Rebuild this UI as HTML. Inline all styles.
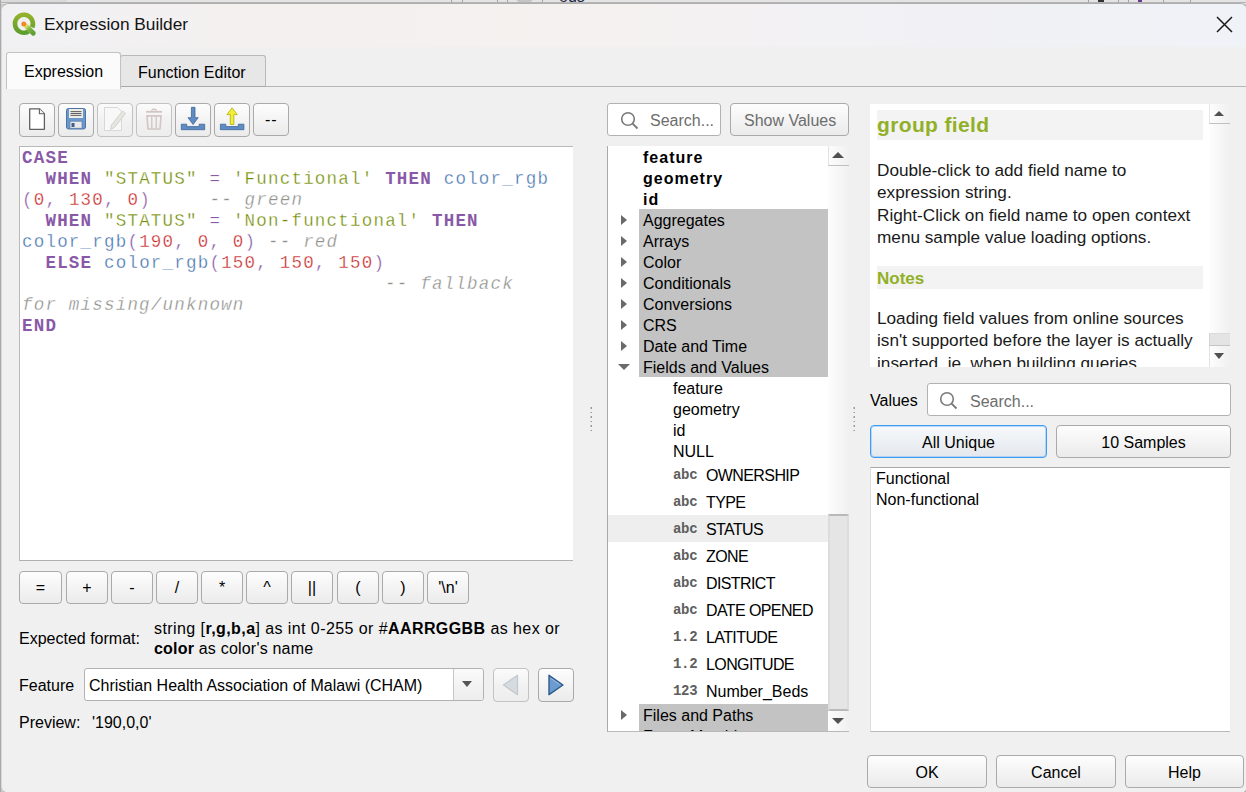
<!DOCTYPE html>
<html><head><meta charset="utf-8">
<style>
*{box-sizing:border-box;margin:0;padding:0}
html,body{width:1246px;height:792px;overflow:hidden;background:#f0f0f0}
body{position:relative;font-family:"Liberation Sans",sans-serif;font-size:16px;color:#000}
.a{position:absolute}
.t{position:absolute;white-space:pre;line-height:16px}
.btn{position:absolute;border:1px solid #aaaaaa;border-radius:4px;background:linear-gradient(#fdfdfd,#f3f3f3 55%,#ebebeb)}
.btnd{position:absolute;border:1px solid #c2c2c2;border-radius:4px;background:linear-gradient(#fbfbfb,#f1f1f1 55%,#ededed)}
.bl{position:absolute;left:0;right:0;text-align:center;white-space:pre;line-height:16px}
.ob .bl{top:8px !important}
.code{font-family:"Liberation Mono",monospace;font-size:17.5px;letter-spacing:1.21px;white-space:pre;line-height:21px}
.kw{color:#8959a8;font-weight:bold}
.fn{color:#4271ae}
.st{color:#718c00}
.nu{color:#c82829}
.op{color:#8959a8}
.cm{color:#8e908c;font-style:italic}
.fn,.st,.nu,.op,.cm{-webkit-text-stroke:0.3px #fff}
.row{position:absolute;height:21px;line-height:21px;white-space:pre;padding-top:1px}
.grp{background:#c3c3c3;left:31px;width:189px;padding-left:4px}
.arr{position:absolute;width:0;height:0;border-top:5px solid transparent;border-bottom:5px solid transparent;border-left:6px solid #6a6a6a}
.ic{position:absolute;font-family:"Liberation Mono",monospace;font-size:14px;font-weight:bold;color:#5e5e5e;line-height:13px;letter-spacing:-0.3px}
.help{position:absolute;font-size:17.2px;color:#1a1a1a;line-height:22.4px;white-space:pre}
</style></head><body>
<!-- background window strip -->
<div class="a" style="left:0;top:0;width:1246px;height:792px;background:#c4c4c4"></div>
<div class="a" style="left:0;top:0;width:1246px;height:4px;background:#e4e4e4"></div>
<div class="a" style="left:0;top:0;width:67px;height:3px;background:#dadada"></div><div class="a" style="left:451px;top:0;width:1px;height:3px;background:#a0a0a0"></div><div class="a" style="left:462px;top:0;width:1px;height:3px;background:#a0a0a0"></div><div class="a" style="left:497px;top:0;width:1px;height:3px;background:#a0a0a0"></div><div class="a" style="left:507px;top:0;width:1px;height:3px;background:#a0a0a0"></div><div class="a" style="left:542px;top:0;width:1px;height:3px;background:#a0a0a0"></div><div class="a" style="left:1088px;top:0;width:1px;height:3px;background:#a0a0a0"></div><div class="a" style="left:1118px;top:0;width:1px;height:3px;background:#a0a0a0"></div><div class="a" style="left:1128px;top:0;width:1px;height:3px;background:#a0a0a0"></div><div class="a" style="left:1163px;top:0;width:1px;height:3px;background:#a0a0a0"></div><div class="a" style="left:1190px;top:0;width:1px;height:3px;background:#a0a0a0"></div><div class="a" style="left:516px;top:-6px;width:17px;height:9px;border-radius:50%;background:#c4c4c4"></div><div class="t" style="left:559px;top:-11px;color:#1d2a44;font-size:16px">eds</div><div class="a" style="left:1098px;top:0;width:6px;height:2px;background:#333"></div><div class="a" style="left:1138px;top:0;width:4px;height:2px;background:#6b3a8c"></div><div class="a" style="left:0;top:2px;width:1246px;height:1px;background:#b4b4b4"></div>
<div class="a" style="left:0;top:0;width:1px;height:792px;background:#a9a9a9"></div>
<!-- window -->
<div class="a" style="left:1px;top:3px;width:1247px;height:791px;background:#f0f0f0;border-radius:8px;border:1px solid #aeaeae;border-left-color:#d8d8d8;overflow:hidden">
 <div class="a" style="left:0;top:0;width:1250px;height:43px;background:linear-gradient(90deg,#f1f1f4 0%,#f4f0ef 22%,#f5f1ef 42%,#f2f1f4 68%,#eff2f7 100%)"></div>
</div>
<svg class="a" style="left:0;top:0" width="48" height="48" viewBox="0 0 48 48">
 <defs><linearGradient id="qg" x1="0" y1="0" x2="0" y2="1"><stop offset="0" stop-color="#93b22a"/><stop offset="1" stop-color="#5e9e2e"/></linearGradient>
 <linearGradient id="qt" x1="0" y1="0" x2="1" y2="1"><stop offset="0" stop-color="#e6e56a"/><stop offset="0.45" stop-color="#7cb342"/><stop offset="1" stop-color="#5f9f35"/></linearGradient></defs>
 <path d="M32.2 27.3 A9 9 0 1 0 28.5 31.5" fill="none" stroke="url(#qg)" stroke-width="4.6"/>
 <path d="M25.8 25.8 L33.3 33.3" stroke="url(#qt)" stroke-width="4.8" stroke-linecap="round"/>
 <circle cx="23.8" cy="24" r="2.5" fill="#ef8a2c"/>
</svg>
<div class="t" style="left:44px;top:16px;font-size:17.3px;line-height:17px;color:#141414">Expression Builder</div>
<svg class="a" style="left:1214px;top:14px" width="22" height="22" viewBox="0 0 22 22"><path d="M3 3L18 18M18 3L3 18" stroke="#1a1a1a" stroke-width="1.5"/></svg>

<!-- tabs -->
<div class="a" style="left:6px;top:86px;width:1240px;height:1px;background:#b6b6b6"></div>
<div class="a" style="left:120px;top:55px;width:146px;height:32px;background:#e7e7e7;border:1px solid #b9b9b9;border-bottom:1px solid #a9a9a9;border-radius:3px 3px 0 0"></div>
<div class="t" style="left:138px;top:65px">Function Editor</div>
<div class="a" style="left:6px;top:52px;width:115px;height:37px;background:#fbfbfb;border:1px solid #c2c2c2;border-bottom:none;border-radius:3px 3px 0 0"></div>
<div class="t" style="left:24px;top:64px">Expression</div>

<!-- toolbar -->
<div class="btn" style="left:19px;top:103px;width:36px;height:34px">
 <svg class="a" style="left:-1px;top:-1px" width="36" height="34" viewBox="0 0 36 34"><path d="M10.7 5.8H20.4L25.4 10.8V26.3H10.7Z" fill="#fff" stroke="#616161" stroke-width="1.3" stroke-linejoin="round"/><path d="M20.4 5.8V10.8H25.4" fill="#f2f2f2" stroke="#616161" stroke-width="1.1"/></svg>
</div>
<div class="btn" style="left:58px;top:103px;width:36px;height:34px">
 <svg class="a" style="left:-1px;top:-1px" width="36" height="34" viewBox="0 0 36 34"><rect x="8.5" y="5.5" width="19" height="20.5" rx="2" fill="#6b98cb" stroke="#4c74a6" stroke-width="1"/><rect x="11" y="6" width="14" height="9" fill="#efebe7"/><path d="M12.5 8.6H23.5M12.5 10.5H23.5M12.5 12.4H23.5" stroke="#5e5e5e" stroke-width="1"/><rect x="12" y="18.2" width="12" height="7" fill="#e9e9e9" stroke="#4c74a6" stroke-width="0.6"/><rect x="13.5" y="20" width="3" height="4" fill="#3e5f8a"/></svg>
</div>
<div class="btnd" style="left:97px;top:103px;width:36px;height:34px">
 <svg class="a" style="left:-1px;top:-1px" width="36" height="34" viewBox="0 0 36 34"><path d="M7.5 4.5H20.5L24.5 8.5V27.5H7.5Z" fill="#f8f8f8" stroke="#d8d8d8" stroke-width="1"/><path d="M25.5 8L28.5 10.5L17.5 24.5L13.5 26.5L14.5 22Z" fill="#e6e6e0" stroke="#cfcfc8" stroke-width="0.9"/></svg>
</div>
<div class="btnd" style="left:136px;top:103px;width:36px;height:34px">
 <svg class="a" style="left:-1px;top:-1px" width="36" height="34" viewBox="0 0 36 34"><path d="M10 8.8H26" stroke="#d3c5c5" stroke-width="1.8"/><path d="M15.3 7.5Q18 5 20.7 7.5" fill="none" stroke="#d3c5c5" stroke-width="1.3"/><path d="M11 12.9H25L24 26H12Z" fill="none" stroke="#d3c5c5" stroke-width="1.6"/><path d="M15.8 13.5V25.5M20.2 13.5V25.5" stroke="#d3c5c5" stroke-width="1.4"/></svg>
</div>
<div class="btn" style="left:175px;top:103px;width:36px;height:34px">
 <svg class="a" style="left:-1px;top:-1px" width="36" height="34" viewBox="0 0 36 34"><path d="M16.4 4.3H20V14.7H23.2L18.1 21.5L13 14.7H16.4Z" fill="#5f8cc3" stroke="#3f6798" stroke-width="0.8" stroke-linejoin="round"/><path d="M6.3 21.2H11.7V23.6H24.2V21.2H29.7V26.7H6.3Z" fill="#5f8cc3" stroke="#3f6798" stroke-width="0.8"/></svg>
</div>
<div class="btn" style="left:214px;top:103px;width:36px;height:34px">
 <svg class="a" style="left:-1px;top:-1px" width="36" height="34" viewBox="0 0 36 34"><path d="M16.3 21.5V11.6H12.9L18.1 4.8L23.3 11.6H19.8V21.5Z" fill="#f2ef3c" stroke="#b3b000" stroke-width="0.8" stroke-linejoin="round"/><path d="M6.4 21.2H11.8V23.6H24.3V21.2H29.9V26.7H6.4Z" fill="#5f8cc3" stroke="#3f6798" stroke-width="0.8"/></svg>
</div>
<div class="btn" style="left:253px;top:103px;width:36px;height:33px"><div class="t" style="left:11px;top:8px;letter-spacing:1px">--</div></div>

<!-- code editor -->
<div class="a" style="left:19px;top:146px;width:554px;height:415px;background:#fff;border:1px solid #b9b9b9;border-right:none;border-bottom-color:#b0b0b0"></div>
<div class="a code" style="left:22px;top:148px"><span class="kw">CASE</span>
  <span class="kw">WHEN</span> <span class="st">"STATUS"</span> <span class="op">=</span> <span class="st">'Functional'</span> <span class="kw">THEN</span> <span class="fn">color_rgb</span>
<span class="op">(</span><span class="nu">0</span><span class="op">,</span> <span class="nu">130</span><span class="op">,</span> <span class="nu">0</span><span class="op">)</span>     <span class="cm">-- green</span>
  <span class="kw">WHEN</span> <span class="st">"STATUS"</span> <span class="op">=</span> <span class="st">'Non-functional'</span> <span class="kw">THEN</span>
<span class="fn">color_rgb</span><span class="op">(</span><span class="nu">190</span><span class="op">,</span> <span class="nu">0</span><span class="op">,</span> <span class="nu">0</span><span class="op">)</span> <span class="cm">-- red</span>
  <span class="kw">ELSE</span> <span class="fn">color_rgb</span><span class="op">(</span><span class="nu">150</span><span class="op">,</span> <span class="nu">150</span><span class="op">,</span> <span class="nu">150</span><span class="op">)</span>
                               <span class="cm">-- fallback</span>
<span class="cm">for missing/unknown</span>
<span class="kw">END</span></div>

<!-- operator buttons -->
<div class="btn ob" style="left:19px;top:571px;width:43px;height:33px"><div class="bl" style="top:7px">=</div></div>
<div class="btn ob" style="left:66px;top:571px;width:42px;height:33px"><div class="bl" style="top:7px">+</div></div>
<div class="btn ob" style="left:111px;top:571px;width:42px;height:33px"><div class="bl" style="top:7px">-</div></div>
<div class="btn ob" style="left:156px;top:571px;width:42px;height:33px"><div class="bl" style="top:7px">/</div></div>
<div class="btn ob" style="left:201px;top:571px;width:42px;height:33px"><div class="bl" style="top:7px">*</div></div>
<div class="btn ob" style="left:246px;top:571px;width:42px;height:33px"><div class="bl" style="top:7px">^</div></div>
<div class="btn ob" style="left:291px;top:571px;width:42px;height:33px"><div class="bl" style="top:7px">||</div></div>
<div class="btn ob" style="left:337px;top:571px;width:42px;height:33px"><div class="bl" style="top:7px">(</div></div>
<div class="btn ob" style="left:382px;top:571px;width:42px;height:33px"><div class="bl" style="top:7px">)</div></div>
<div class="btn ob" style="left:427px;top:571px;width:42px;height:33px"><div class="bl" style="top:7px">'\n'</div></div>

<!-- expected format -->
<div class="t" style="left:19px;top:631px">Expected format:</div>
<div class="t" style="left:154px;top:621px;letter-spacing:0.42px">string [<b>r,g,b,a</b>] as int 0-255 or #<b>AARRGGBB</b> as hex or</div>
<div class="t" style="left:154px;top:641px;letter-spacing:0.2px"><b>color</b> as color's name</div>

<!-- feature -->
<div class="t" style="left:19px;top:678px">Feature</div>
<div class="a" style="left:84px;top:668px;width:400px;height:33px;background:#fff;border:1px solid #b2b2b2;border-radius:3px"></div>
<div class="a" style="left:453px;top:669px;width:30px;height:31px;background:linear-gradient(#fafafa,#ededed);border-left:1px solid #c6c6c6;border-radius:0 3px 3px 0"></div>
<div class="a" style="left:462px;top:681px;width:0;height:0;border-left:5.5px solid transparent;border-right:5.5px solid transparent;border-top:6.5px solid #555"></div>
<div class="t" style="left:89px;top:678px">Christian Health Association of Malawi (CHAM)</div>
<div class="btnd" style="left:493px;top:668px;width:36px;height:34px">
 <svg class="a" style="left:-1px;top:-1px" width="36" height="34" viewBox="0 0 36 34"><path d="M24.5 7.3L10.5 17L24.5 26.7Z" fill="#d6dbe0" stroke="#c4c9ce" stroke-width="1.3" stroke-linejoin="round"/></svg>
</div>
<div class="btn" style="left:538px;top:668px;width:36px;height:34px">
 <svg class="a" style="left:-1px;top:-1px" width="36" height="34" viewBox="0 0 36 34"><path d="M11 7.3L25 17L11 26.7Z" fill="#6c9bd0" stroke="#2f5a8c" stroke-width="1.4" stroke-linejoin="round"/><path d="M12.6 10.2L21.5 16.4" stroke="#a9c6e8" stroke-width="0.8"/></svg>
</div>

<div class="t" style="left:19px;top:715px">Preview:</div>
<div class="t" style="left:92px;top:715px">'190,0,0'</div>

<!-- middle panel -->
<div class="a" style="left:607px;top:103px;width:114px;height:33px;background:#fff;border:1px solid #b2b2b2;border-radius:3px"></div>
<svg class="a" style="left:619px;top:110px" width="22" height="22" viewBox="0 0 22 22"><circle cx="9" cy="9" r="6.3" fill="none" stroke="#7a7a7a" stroke-width="1.6"/><path d="M13.6 13.6L18.5 18.5" stroke="#7a7a7a" stroke-width="1.9"/></svg>
<div class="t" style="left:650px;top:113px;color:#6d6d6d">Search...</div>
<div class="btn" style="left:730px;top:103px;width:119px;height:33px"><div class="t" style="left:13px;top:9px;color:#6d6d6d">Show Values</div></div>

<div class="a" style="left:607px;top:146px;width:242px;height:586px;background:#fff;border-left:1px solid #a9a9a9;border-bottom:1px solid #b9b9b9;overflow:hidden">
 <div class="a" style="left:220px;top:0;width:21px;height:586px;background:linear-gradient(90deg,#fdfdfd,#f0f0f0)"></div>
 <div class="a" style="left:220px;top:0;width:21px;height:20px;border-left:1px solid #e2e2e2;border-bottom:1px solid #c0c0c0"></div>
 <div class="a" style="left:224.2px;top:5.5px;width:0;height:0;border-left:6.1px solid transparent;border-right:6.1px solid transparent;border-bottom:6.2px solid #505050"></div>
 <div class="a" style="left:220px;top:368px;width:21px;height:197px;background:#e5e5e5;border-top:2px solid #b9b9b9;border-bottom:2px solid #b9b9b9;border-left:2px solid #dcdcdc;border-right:2px solid #dddddd"></div>
 <div class="a" style="left:224.2px;top:572px;width:0;height:0;border-left:6px solid transparent;border-right:6px solid transparent;border-top:6.2px solid #505050"></div>
 <div class="a" style="left:0;top:369px;width:220px;height:27px;background:#eeeeee"></div>
</div>
<div class="a" id="tree" style="left:608px;top:146px;width:220px;height:585px;overflow:hidden">
 <div class="row" style="top:0;left:35px;font-weight:bold;letter-spacing:1px">feature</div>
 <div class="row" style="top:21px;left:35px;font-weight:bold;letter-spacing:1px">geometry</div>
 <div class="row" style="top:42px;left:35px;font-weight:bold;letter-spacing:1px">id</div>
 <div class="row grp" style="top:63px">Aggregates</div><div class="arr" style="left:13px;top:69px"></div>
 <div class="row grp" style="top:84px">Arrays</div><div class="arr" style="left:13px;top:90px"></div>
 <div class="row grp" style="top:105px">Color</div><div class="arr" style="left:13px;top:111px"></div>
 <div class="row grp" style="top:126px">Conditionals</div><div class="arr" style="left:13px;top:132px"></div>
 <div class="row grp" style="top:147px">Conversions</div><div class="arr" style="left:13px;top:153px"></div>
 <div class="row grp" style="top:168px">CRS</div><div class="arr" style="left:13px;top:174px"></div>
 <div class="row grp" style="top:189px">Date and Time</div><div class="arr" style="left:13px;top:195px"></div>
 <div class="row grp" style="top:210px">Fields and Values</div><div class="a" style="left:10px;top:218px;width:0;height:0;border-left:6px solid transparent;border-right:6px solid transparent;border-top:6px solid #6a6a6a"></div>
 <div class="row" style="top:231px;left:65px">feature</div>
 <div class="row" style="top:252px;left:65px">geometry</div>
 <div class="row" style="top:273px;left:65px">id</div>
 <div class="row" style="top:294px;left:65px">NULL</div>
 <div class="row" style="top:318px;left:98px;letter-spacing:-0.6px">OWNERSHIP</div><div class="ic" style="left:65px;top:323px">abc</div>
 <div class="row" style="top:345px;left:98px;letter-spacing:-0.6px">TYPE</div><div class="ic" style="left:65px;top:350px">abc</div>
 <div class="row" style="top:372px;left:98px;letter-spacing:-0.6px">STATUS</div><div class="ic" style="left:65px;top:377px">abc</div>
 <div class="row" style="top:399px;left:98px;letter-spacing:-0.6px">ZONE</div><div class="ic" style="left:65px;top:404px">abc</div>
 <div class="row" style="top:426px;left:98px;letter-spacing:-0.6px">DISTRICT</div><div class="ic" style="left:65px;top:431px">abc</div>
 <div class="row" style="top:453px;left:98px;letter-spacing:-0.6px">DATE OPENED</div><div class="ic" style="left:65px;top:458px">abc</div>
 <div class="row" style="top:480px;left:98px;letter-spacing:-0.6px">LATITUDE</div><div class="ic" style="left:65px;top:485px">1.2</div>
 <div class="row" style="top:507px;left:98px;letter-spacing:-0.6px">LONGITUDE</div><div class="ic" style="left:65px;top:512px">1.2</div>
 <div class="row" style="top:534px;left:98px">Number_Beds</div><div class="ic" style="left:65px;top:539px">123</div>
 <div class="row grp" style="top:558px">Files and Paths</div><div class="arr" style="left:13px;top:564px"></div>
 <div class="row grp" style="top:579px">Fuzzy Matching</div><div class="arr" style="left:13px;top:585px"></div>
</div>

<!-- splitter handles -->
<svg class="a" style="left:590px;top:406px" width="3" height="27"><g fill="#9a9a9a"><rect x="0.5" y="1" width="1.5" height="2"/><rect x="0.5" y="6" width="1.5" height="1"/><rect x="0.5" y="10" width="1.5" height="2"/><rect x="0.5" y="15" width="1.5" height="1"/><rect x="0.5" y="19" width="1.5" height="2"/><rect x="0.5" y="24" width="1.5" height="1"/></g></svg>
<svg class="a" style="left:853px;top:406px" width="3" height="27"><g fill="#9a9a9a"><rect x="0.5" y="1" width="1.5" height="2"/><rect x="0.5" y="6" width="1.5" height="1"/><rect x="0.5" y="10" width="1.5" height="2"/><rect x="0.5" y="15" width="1.5" height="1"/><rect x="0.5" y="19" width="1.5" height="2"/><rect x="0.5" y="24" width="1.5" height="1"/></g></svg>

<!-- help panel -->
<div class="a" style="left:870px;top:104px;width:360px;height:263px;background:#fff;overflow:hidden">
 <div class="a" style="left:339px;top:0;width:21px;height:263px;background:linear-gradient(90deg,#fdfdfd,#f0f0f0)"></div>
 <div class="a" style="left:339px;top:0;width:21px;height:20px;border-left:1px solid #e6e6e6;border-bottom:1px solid #c0c0c0"></div>
 <div class="a" style="left:344px;top:7px;width:0;height:0;border-left:5.5px solid transparent;border-right:5.5px solid transparent;border-bottom:5.5px solid #505050"></div>
 <div class="a" style="left:339px;top:229px;width:21px;height:13px;background:#e4e4e4;border-left:1px solid #d4d4d4;border-top:1px solid #dcdcdc;border-bottom:1px solid #c4c4c4"></div>
 <div class="a" style="left:339px;top:242px;width:21px;height:21px;border-left:1px solid #e2e2e2"></div>
 <div class="a" style="left:343.5px;top:249px;width:0;height:0;border-left:5.8px solid transparent;border-right:5.8px solid transparent;border-top:6px solid #505050"></div>
 <div class="a" style="left:7px;top:6px;width:326px;height:30px;background:#f3f3f3"></div>
 <div class="t" style="left:7px;top:10px;font-size:21px;line-height:21px;font-weight:bold;color:#92b027;letter-spacing:0.35px">group field</div>
 <div class="help" style="left:7px;top:55px">Double-click to add field name to
expression string.
Right-Click on field name to open context
menu sample value loading options.</div>
 <div class="a" style="left:7px;top:162px;width:326px;height:23px;background:#f3f3f3"></div>
 <div class="t" style="left:7px;top:166px;font-size:17px;line-height:17px;font-weight:bold;color:#92b027">Notes</div>
 <div class="help" style="left:7px;top:203px">Loading field values from online sources
isn't supported before the layer is actually
inserted, ie. when building queries</div>
</div>

<!-- values -->
<div class="t" style="left:870px;top:393px">Values</div>
<div class="a" style="left:927px;top:383px;width:304px;height:33px;background:#fff;border:1px solid #b2b2b2;border-radius:3px"></div>
<svg class="a" style="left:938px;top:390px" width="22" height="22" viewBox="0 0 22 22"><circle cx="9" cy="9" r="6.3" fill="none" stroke="#7a7a7a" stroke-width="1.6"/><path d="M13.6 13.6L18.5 18.5" stroke="#7a7a7a" stroke-width="1.9"/></svg>
<div class="t" style="left:970px;top:394px;color:#6d6d6d">Search...</div>
<div class="a" style="left:870px;top:425px;width:177px;height:33px;border:1px solid #3b9cf3;box-shadow:inset 0 0 0 1px rgba(110,180,245,0.45);border-radius:4px;background:linear-gradient(#f7f9fb,#e3e8ee)"><div class="bl" style="top:9px">All Unique</div></div>
<div class="btn" style="left:1056px;top:425px;width:175px;height:33px"><div class="bl" style="top:9px">10 Samples</div></div>
<div class="a" style="left:870px;top:467px;width:360px;height:265px;background:#fff;border-top:1px solid #a9a9a9;border-left:1px solid #dedede;border-bottom:1px solid #b9b9b9"></div>
<div class="t" style="left:876px;top:471px">Functional</div>
<div class="t" style="left:876px;top:492px">Non-functional</div>

<!-- dialog buttons -->
<div class="btn" style="left:867px;top:755px;width:120px;height:33px"><div class="bl" style="top:9px">OK</div></div>
<div class="btn" style="left:996px;top:755px;width:120px;height:33px"><div class="bl" style="top:9px">Cancel</div></div>
<div class="btn" style="left:1125px;top:755px;width:119px;height:33px"><div class="bl" style="top:9px">Help</div></div>
</body></html>
